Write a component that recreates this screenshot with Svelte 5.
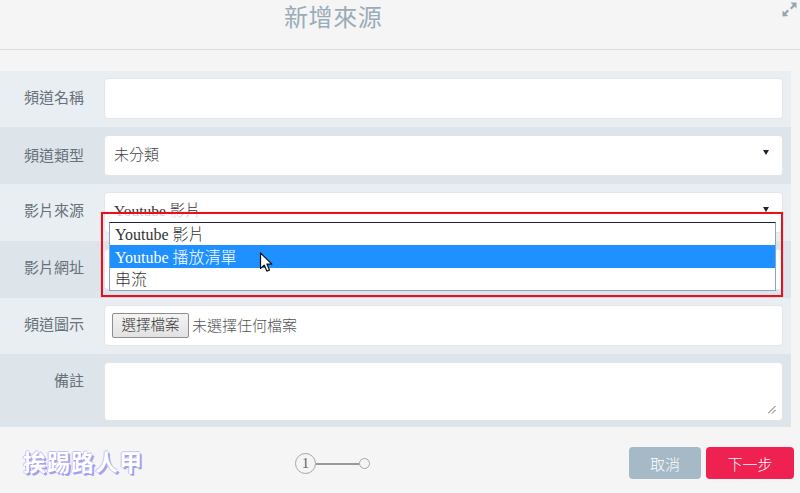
<script>
  const options = ['Youtube 影片', 'Youtube 播放清單', '串流'];
</script>

<div class="page">
  <header class="head">
    <h1>新增來源</h1>
    <svg class="expand" width="15" height="15" viewBox="0 0 15 15">
      <path d="M8.500 0.500h6v6l-2-2-3 3-1.600-1.600 3-3z M0.500 14.500v-6l2 2 3-3 1.600 1.600-3 3 2 2z" fill="#92a7b6"/>
    </svg>
  </header>

  <main class="form">
    <div class="row a short"><label>頻道名稱</label><div class="box"></div></div>
    <div class="row b"><label class="low">頻道類型</label><div class="box text">未分類<span class="caret"></span></div></div>
    <div class="row a"><label>影片來源</label><div class="box text src">Youtube 影片<span class="caret"></span></div></div>
    <div class="row b"><label>影片網址</label><div class="box"></div></div>
    <div class="row a short"><label>頻道圖示</label><div class="box file"><span class="filebtn">選擇檔案</span><span class="fname">未選擇任何檔案</span></div></div>
    <div class="row b tall"><label>備註</label><div class="box area">
      <svg class="grip" width="8" height="8" viewBox="0 0 8 8"><path d="M0 7.500 7.500 0M4 7.500 7.500 4" stroke="#666" fill="none"/></svg>
    </div></div>
  </main>

  <footer class="foot">
    <div class="logo">挨踢路人甲</div>
    <div class="steps"><span class="dot one">1</span><span class="line"></span><span class="dot two"></span></div>
    <div class="btns"><button class="cancel">取消</button><button class="next">下一步</button></div>
  </footer>

  <div class="mark">
    <ul class="list">
      {#each options as o, i}
        <li class:sel={i === 1}>{o}</li>
      {/each}
    </ul>
  </div>

  <svg class="cursor" width="15" height="21" viewBox="0 0 15 21">
    <path d="M1.500 1v15.500l3.700-3.400 2.600 6 2.700-1.200-2.600-5.800h5z" fill="#fff" stroke="#111" stroke-width="1.200" stroke-linejoin="round"/>
  </svg>
</div>

<style>
  :global(body) { margin: 0; background: #f5f5f5; }
  .page {
    position: relative;
    width: 800px;
    height: 493px;
    overflow: hidden;
    background: #f5f5f5;
    font-family: "Noto Sans CJK TC", sans-serif;
    font-weight: 300;
    color: #555;
  }
  .head {
    position: relative;
    height: 49px;
    border-bottom: 1px solid #dcdcdc;
    box-sizing: content-box;
    display: flex;
    justify-content: flex-start;
    padding-left: 284px;
    box-sizing: border-box;
    height: 50px;
  }
  h1 {
    margin: 0;
    padding: 0;
    font-size: 24px;
    letter-spacing: 0.6px;
    line-height: 31px;
    font-weight: 400;
    color: #9aacb9;
    white-space: nowrap;
  }
  .expand { position: absolute; right: 3px; top: 2px; }
  .form { margin: 21px 9px 0 0; }
  .row { display: flex; align-items: flex-start; height: 57px; }
  .row.short { height: 56px; }
  .row.a { background: #e9eef2; }
  .row.b { background: #dde4ea; }
  .row.tall { height: 73px; }
  label {
    width: 84px;
    padding: 15px 20px 0 0;
    line-height: 22px;
    text-align: right;
    flex: none;
    font-size: 15px;
    font-weight: 400;
    color: #66717a;
    box-sizing: content-box;
  }
  label.low { padding-top: 17px; }
  .box {
    position: relative;
    width: 679px;
    height: 41px;
    margin-top: 7px;
    box-sizing: border-box;
    background: #fff;
    border: 1px solid #e2e6e9;
    border-radius: 4px;
    flex: none;
  }
  .b .box { margin-top: 8px; }
  .text { display: flex; align-items: center; padding: 0 0 4px 9px; font-size: 15px; color: #444; }
  .caret {
    position: absolute;
    right: 13px;
    top: 14px;
    border-left: 3.500px solid transparent;
    border-right: 3.500px solid transparent;
    border-top: 5px solid #1a2430;
  }
  .box.src {
    margin-top: 8px;
    font-family: "Liberation Serif", "Noto Sans CJK TC", serif;
    font-size: 15.500px;
    color: #333;
    padding-bottom: 8px;
  }
  .file { display: flex; align-items: center; padding-left: 7px; gap: 3px; font-size: 15px; color: #555; }
  .fname { padding-bottom: 3px; }
  .filebtn {
    display: block;
    width: 77px;
    height: 25px;
    line-height: 20px;
    box-sizing: border-box;
    text-align: center;
    font-size: 14.500px;
    color: #333;
    background: linear-gradient(#f4f4f4, #e2e2e2);
    border: 1px solid #8f8f8f;
    border-radius: 2px;
  }
  .b .area { height: 59px; margin-top: 8px; }
  .grip { position: absolute; right: 6px; bottom: 6px; }
  .foot { position: relative; height: 66px; }
  .logo {
    position: absolute;
    left: 23px;
    top: 18px;
    font-size: 23px;
    line-height: 32px;
    font-weight: 700;
    letter-spacing: 1px;
    color: #fff;
    text-shadow: 1px 1px 0 #a3a0f0, -1px 0 0 #c4c2f7, 0 -1px 0 #c4c2f7, 2px 2px 0 #a3a0f0;
    white-space: nowrap;
  }
  .steps { position: absolute; left: 295px; top: 26px; display: flex; align-items: center; }
  .dot {
    display: block;
    box-sizing: border-box;
    border: 1px solid #a5a5a5;
    border-radius: 50%;
    background: #f5f5f5;
    font-family: "Liberation Serif", serif;
    font-size: 15px;
    text-align: center;
    color: #666;
  }
  .one { width: 21px; height: 21px; line-height: 19px; }
  .two { width: 11px; height: 11px; }
  .line { display: block; width: 43px; height: 2px; background: #999; }
  .btns { position: absolute; left: 629px; top: 20px; display: flex; gap: 5px; }
  button {
    border: 0;
    height: 32px;
    padding: 0;
    border-radius: 4px;
    color: #fff;
    font: 300 15px "Noto Sans CJK TC", sans-serif;
  }
  .cancel { width: 72px; background: #a5b9c6; }
  .next { width: 88px; background: #ee2150; }
  .mark {
    position: absolute;
    left: 101px;
    top: 212px;
    width: 682px;
    height: 85px;
    box-sizing: border-box;
    border: 2px solid #e8101c;
    box-shadow: 0 0 1px rgba(232, 16, 28, 0.4);
    padding: 8px 6px 0 6px;
  }
  .mark::before {
    content: "";
    position: absolute;
    left: 4px;
    right: 4px;
    top: 0;
    height: 8px;
    background: rgba(255, 255, 255, 0.75);
  }
  .list {
    position: relative;
    list-style: none;
    margin: 0;
    padding: 0;
    width: 667px;
    height: 69px;
    box-sizing: border-box;
    background: #fff;
    border: 1px solid #8fa3c4;
    border-top: 1px solid #1c2433;
    font-family: "Liberation Serif", "Noto Sans CJK TC", serif;
    font-size: 16px;
    color: #333;
  }
  li { height: 22px; line-height: 24px; padding-left: 5px; white-space: nowrap; }
  li.sel { background: #1e90ff; color: #fff; height: 23px; line-height: 25px; }
  .cursor { position: absolute; left: 259px; top: 252px; }
</style>
